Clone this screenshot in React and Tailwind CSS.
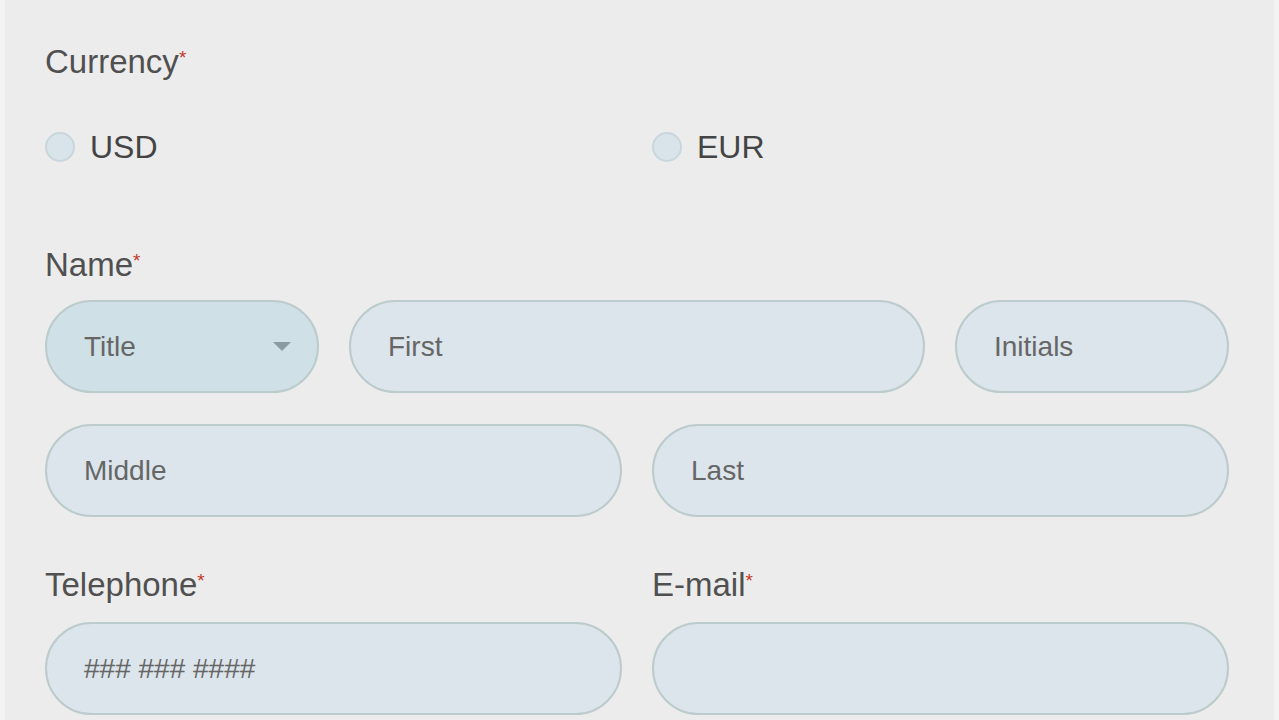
import { ChevronDown } from "lucide-react";

function Label({ children }) {
    return (
        <div className="text-[33px] leading-[40px] text-[#505050]">
            {children}
            <span className="text-[#c0392b] text-[19px] align-top leading-[32px]">*</span>
        </div>
    );
}

function Radio({ label }) {
    return (
        <label className="flex items-center gap-[15px] h-[40px]">
            <span className="w-[30px] h-[30px] rounded-full bg-[#d9e3ea] border-2 border-[#c9d6dc]" />
            <span className="text-[32px] text-[#444]">{label}</span>
        </label>
    );
}

function Field({ placeholder, className = "" }) {
    return (
        <div
            className={`h-[93px] rounded-full border-2 border-[#bccbcc] bg-[#dce5eb] flex items-center pl-[37px] text-[28px] text-[#666] ${className}`}
        >
            {placeholder}
        </div>
    );
}

export default function App() {
    return (
        <div className="min-h-[720px] w-[1279px] bg-[#f3f3f3] flex" style={{ fontFamily: '"Liberation Sans", Arial, sans-serif' }}>
            <div className="ml-[5px] w-[1269px] min-h-[720px] bg-[#ececec] pl-[40px] pt-[42px]">
                <div className="w-[1184px]">
                    <Label>Currency</Label>
                    <div className="grid grid-cols-2 gap-[30px] mt-[45px]">
                        <Radio label="USD" />
                        <Radio label="EUR" />
                    </div>

                    <div className="mt-[78px]">
                        <Label>Name</Label>
                    </div>
                    <div className="grid grid-cols-[274px_1fr_274px] gap-[30px] mt-[15px]">
                        <div className="h-[93px] rounded-full border-2 border-[#bccbcc] bg-[#cfe0e7] flex items-center justify-between pl-[37px] pr-[26px] text-[28px] text-[#666]">
                            Title
                            <svg width="18" height="10" viewBox="0 0 18 10">
                                <path d="M0 0 L18 0 L9 9 Z" fill="#8b9ba1" />
                            </svg>
                        </div>
                        <Field placeholder="First" />
                        <Field placeholder="Initials" />
                    </div>
                    <div className="grid grid-cols-2 gap-[30px] mt-[31px]">
                        <Field placeholder="Middle" />
                        <Field placeholder="Last" />
                    </div>

                    <div className="grid grid-cols-2 gap-[30px] mt-[48px]">
                        <div>
                            <Label>Telephone</Label>
                            <Field placeholder="### ### ####" className="mt-[17px]" />
                        </div>
                        <div>
                            <Label>E-mail</Label>
                            <Field placeholder="" className="mt-[17px]" />
                        </div>
                    </div>
                </div>
            </div>
        </div>
    );
}
